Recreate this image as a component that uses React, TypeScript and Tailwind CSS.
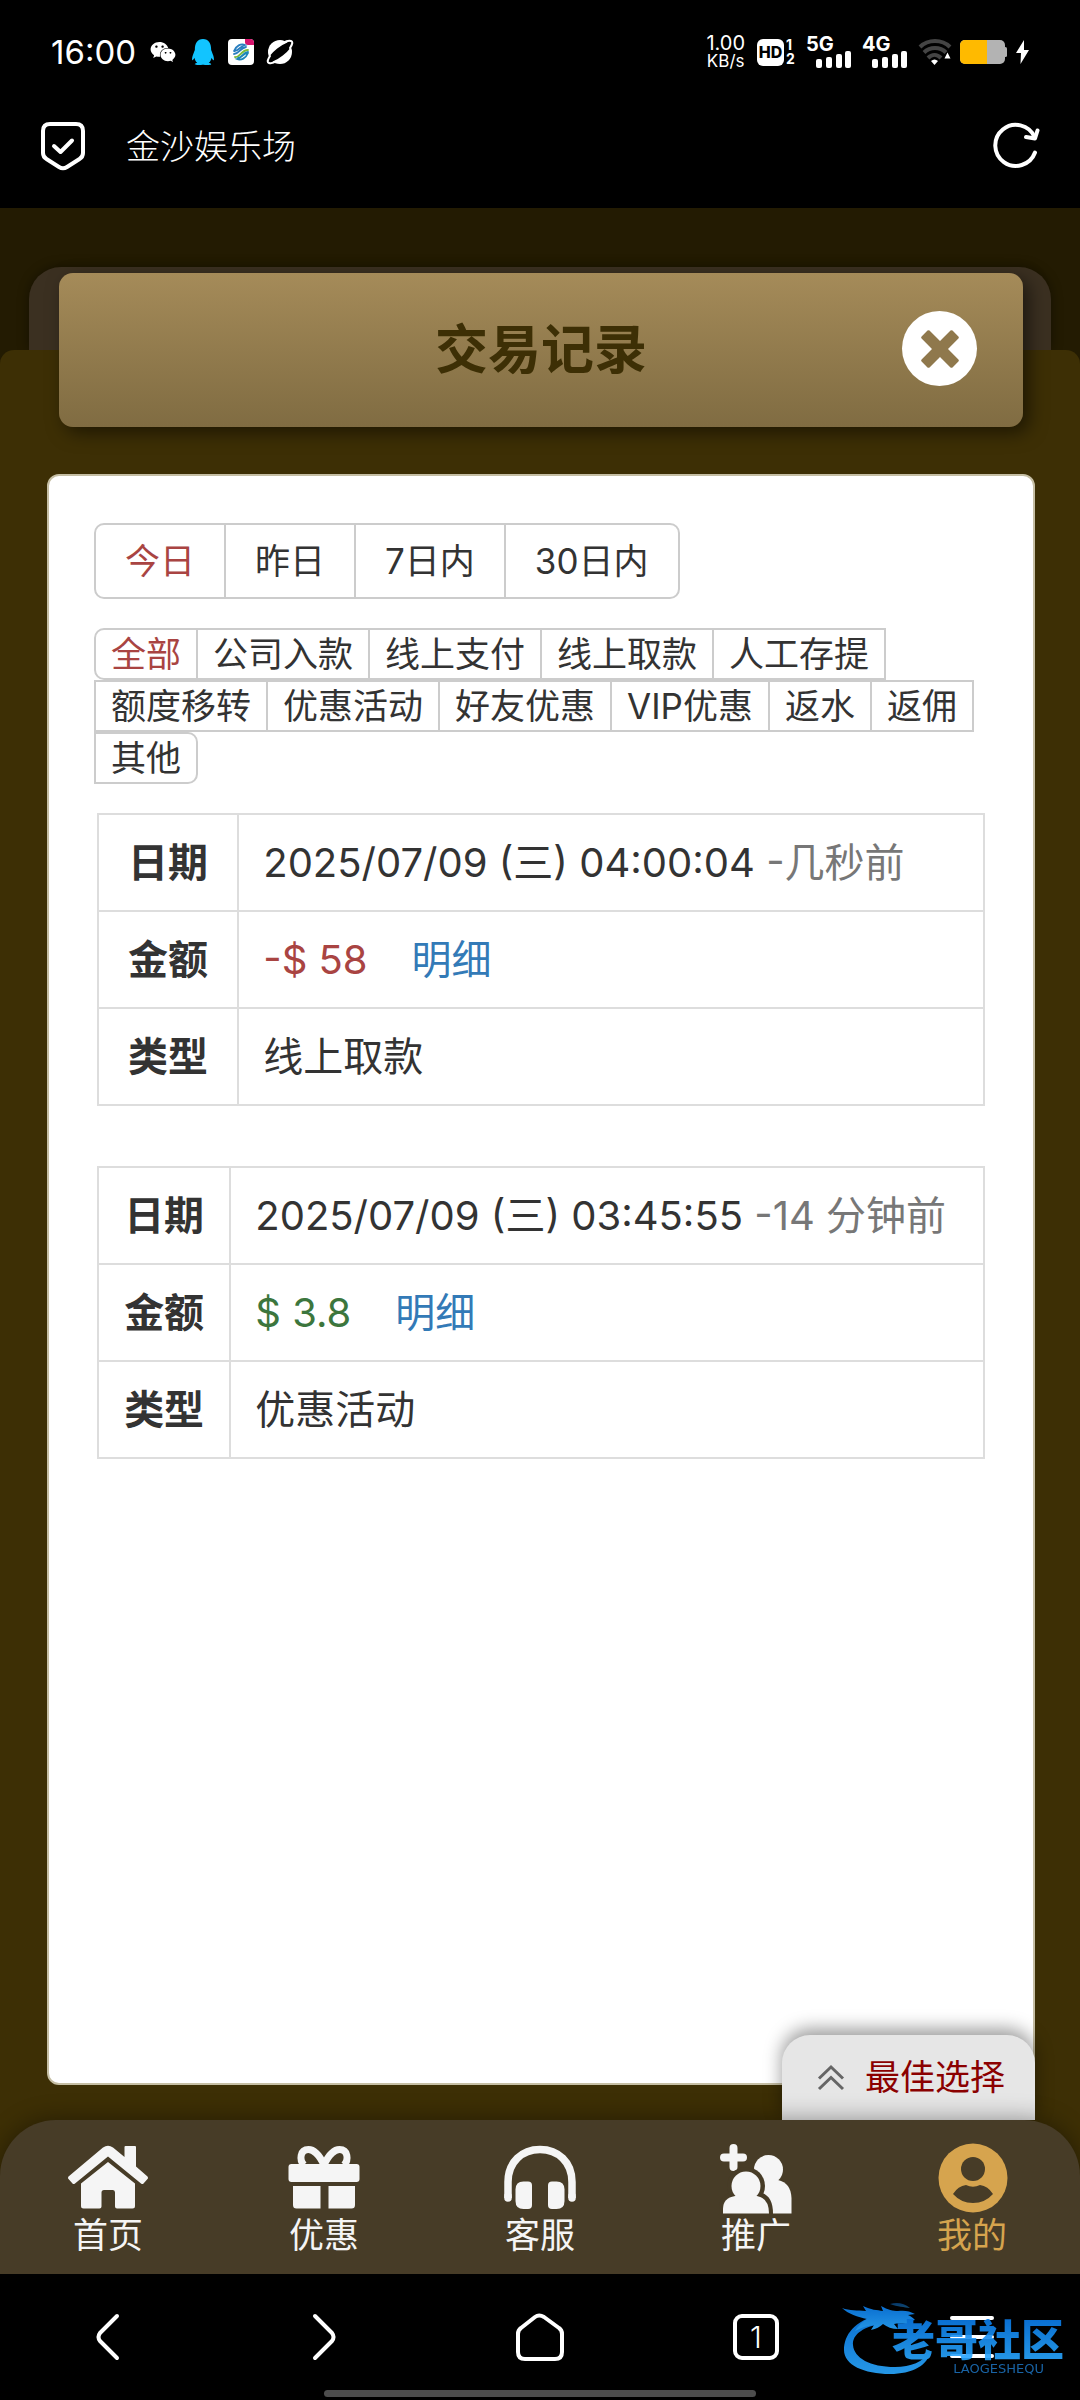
import { ReactNode } from 'react';
import { FaQq, FaWeixin } from 'react-icons/fa';

interface TransactionRecord {
  date: string;
  ago: string;
  amount: string;
  negative: boolean;
  type: string;
}

const periods = ['今日', '昨日', '7日内', '30日内'];

// Each row of the filter wraps on its own
const typeRows = [
  ['全部', '公司入款', '线上支付', '线上取款', '人工存提'],
  ['额度移转', '优惠活动', '好友优惠', 'VIP优惠', '返水', '返佣'],
  ['其他'],
];

const records: TransactionRecord[] = [
  {
    date: '2025/07/09 (三) 04:00:04',
    ago: '-几秒前',
    amount: '-$ 58',
    negative: true,
    type: '线上取款',
  },
  {
    date: '2025/07/09 (三) 03:45:55',
    ago: '-14 分钟前',
    amount: '$ 3.8',
    negative: false,
    type: '优惠活动',
  },
];

function SignalBars({ label }: { label: string }) {
  return (
    <div className="relative h-8 w-[46px]">
      <span className="absolute left-0 top-0 text-[20px] font-bold leading-4">{label}</span>
      <svg viewBox="0 0 46 32" className="absolute inset-0" fill="currentColor" aria-hidden="true">
        <rect x="10" y="23" width="6" height="9" rx="2" />
        <rect x="20" y="21" width="6" height="11" rx="2" />
        <rect x="30" y="18" width="6" height="14" rx="2" />
        <rect x="39" y="15" width="6" height="17" rx="2" />
      </svg>
    </div>
  );
}

function StatusBar() {
  return (
    <div className="flex h-[104px] items-center justify-between pl-[51px] pr-[51px]">
      <div className="flex items-center">
        <span className="w-[99px] text-[33px] leading-10">16:00</span>
        <FaWeixin className="size-[26px]" />
        <FaQq className="ml-3.5 size-[26px] text-[#12c4ff]" />
        {/* Carrier app */}
        <svg viewBox="0 0 26 26" className="ml-3 size-[26px]" aria-hidden="true">
          <rect width="26" height="26" rx="4" fill="#fff" />
          <path d="M17 0h5a4 4 0 0 1 4 4v2h-6a3 3 0 0 1-3-3z" fill="#d6136c" />
          <g fill="none" strokeWidth="1.8" strokeLinecap="round">
            <path d="M6 12c2-5 7-8 11-6-4 1-6 5-10 6M6 15c5 0 6-6 12-7" stroke="#2a7fc0" />
            <path d="M7 18c5 1 6-7 13-7" stroke="#7cbb3c" />
            <path d="M20 14c-2 5-7 8-11 6 4-1 6-5 10-6M10 19c4 0 5-6 10-6" stroke="#1c86b8" />
          </g>
        </svg>
        {/* Planet */}
        <svg viewBox="0 0 28 26" className="ml-3 h-[26px] w-7" aria-hidden="true">
          <circle cx="14" cy="13" r="12" fill="#fff" />
          <ellipse cx="14" cy="13" rx="15" ry="4.500" transform="rotate(-38 14 13)" fill="#000" />
          <path
            d="M4 17Q0 23 3 24q3 1 8-2M24 9q4-6 1-7-3-1-8 2"
            fill="none"
            stroke="#fff"
            strokeWidth="2"
            strokeLinecap="round"
          />
        </svg>
      </div>

      <div className="flex items-center">
        <div className="mr-3 flex flex-col items-center">
          <span className="text-[20px] leading-[18px]">1.00</span>
          <span className="text-[17px] leading-[18px]">KB/s</span>
        </div>
        <span className="flex size-[27px] items-center justify-center rounded-md bg-white text-[16px] font-extrabold text-black">
          HD
        </span>
        <div className="ml-0.5 mr-2.5 flex w-2.5 flex-col text-[14px] font-bold leading-[14px]">
          <span>1</span>
          <span>2</span>
        </div>
        <SignalBars label="5G" />
        <div className="w-2.5" />
        <SignalBars label="4G" />
        <svg viewBox="0 0 34 28" className="ml-2.5 h-7 w-[34px]" fill="none" aria-hidden="true">
          <g stroke="#444" strokeWidth="4">
            <path d="M2 9C10 1 24 1 32 9" />
            <path d="M6 14.500c6-6 16-6 22 0" />
            <path d="M10 20c4-4 9-4 13 0" />
          </g>
          <path d="M13 23q3.500-3 7 0l-3.500 4z" fill="#fff" />
          <path d="M26.500 20.500l3-6 3 6z" fill="#fff" />
        </svg>
        <svg viewBox="0 0 48 24" className="ml-2 h-6 w-12" aria-hidden="true">
          <rect x="0" y="0" width="45" height="24" rx="5" fill="#b3b3b3" />
          <rect x="44" y="7" width="3" height="10" rx="1.500" fill="#b3b3b3" />
          <path d="M5 0h22v24H5a5 5 0 0 1-5-5V5a5 5 0 0 1 5-5z" fill="#ffba00" />
        </svg>
        <svg viewBox="0 0 13 24" className="ml-2 h-6 w-[13px]" fill="#fff" aria-hidden="true">
          <path d="M8 0L0 13h5L4.500 24 13 10H8z" />
        </svg>
      </div>
    </div>
  );
}

function BrowserBar() {
  return (
    <div className="flex h-[104px] items-start px-10 pt-[17px]">
      <svg
        viewBox="0 0 46 50"
        className="h-[50px] w-[46px]"
        fill="none"
        stroke="#fff"
        strokeWidth="4"
        strokeLinecap="round"
        strokeLinejoin="round"
        aria-hidden="true"
      >
        <path d="M10 3h26q7 0 7 7v22q0 4-3.500 6L27 46q-4 2.500-8 0L6.500 38Q3 36 3 32V10q0-7 7-7z" />
        <path d="M14 25l6.500 6L32 19.500" />
      </svg>
      <h1 className="ml-10 flex-1 text-[34px] font-light leading-[52px]">金沙娱乐场</h1>
      <button type="button" aria-label="刷新" className="h-[50px]">
        <svg
          viewBox="0 0 48 50"
          className="h-[50px] w-12"
          fill="none"
          stroke="#fff"
          strokeWidth="4"
          strokeLinecap="round"
          strokeLinejoin="round"
        >
          <path d="M43 31.500A20.500 20.500 0 1 1 42.500 16" />
          <path d="M45.500 9.500L43 17.500l-9-1.500" />
        </svg>
      </button>
    </div>
  );
}

function PageHeader() {
  return (
    <header className="relative mx-[57px] -mt-[77px] ml-[59px] flex h-[154px] items-center justify-center rounded-[14px] bg-linear-to-b from-[#a58b59] to-[#806c42] shadow-[6px_6px_18px_rgba(0,0,0,0.5)]">
      <h2 className="text-[53px] font-bold leading-none text-[#3d2f05]">交易记录</h2>
      <button
        type="button"
        aria-label="关闭"
        className="absolute right-[46px] top-[38px] flex size-[75px] items-center justify-center rounded-full bg-white"
      >
        <svg viewBox="0 0 38 38" className="size-[38px]" fill="#8f784c">
          <path d="M8.500.600L19 11 29.500.600q1-.900 2 0l5.900 5.900q.900 1 0 2L27 19l10.400 10.500q.900 1 0 2l-5.900 5.900q-1 .900-2 0L19 27 8.500 37.400q-1 .900-2 0L.600 31.500q-.900-1 0-2L11 19 .600 8.500q-.900-1 0-2L6.500.600q1-.900 2 0z" />
        </svg>
      </button>
    </header>
  );
}

function PeriodFilter() {
  return (
    <div className="flex w-fit divide-x-2 divide-[#ccc] rounded-[10px] border-2 border-[#ccc] text-[35px]">
      {periods.map((period, i) => (
        <button
          key={period}
          type="button"
          aria-pressed={i === 0}
          className={`h-18 px-[29px] ${i === 0 ? 'text-[#a94442]' : ''}`}
        >
          {period}
        </button>
      ))}
    </div>
  );
}

function TypeFilter() {
  return (
    <div className="mt-[29px] flex flex-col items-start text-[35px]">
      {typeRows.map((row, r) => (
        <div
          key={r}
          className={`flex divide-x-2 divide-[#ccc] border-2 border-[#ccc] ${r === 0 ? 'rounded-l-[10px]' : ''} ${
            r === typeRows.length - 1 ? 'rounded-r-[10px]' : ''
          }`}
        >
          {row.map((type) => (
            <button
              key={type}
              type="button"
              aria-pressed={type === '全部'}
              className={`h-12 px-[15px] leading-[48px] ${type === '全部' ? 'text-[#a94442]' : ''}`}
            >
              {type}
            </button>
          ))}
        </div>
      ))}
    </div>
  );
}

function Row({ label, children }: { label: string; children: ReactNode }) {
  return (
    <tr>
      <th scope="row" className="h-[97px] border-2 border-[#ddd] px-6 font-bold">
        {label}
      </th>
      <td className="border-2 border-[#ddd] px-6">{children}</td>
    </tr>
  );
}

function RecordTable({ record }: { record: TransactionRecord }) {
  return (
    <div className="px-[3px]">
      <table className="w-full border-collapse whitespace-nowrap text-[40px] leading-[58px]">
        <tbody>
          <Row label="日期">
            {record.date} <span className="text-[#777]">{record.ago}</span>
          </Row>
          <Row label="金额">
            <span className={record.negative ? 'text-[#a94442]' : 'text-[#3c763d]'}>{record.amount}</span>
            <a href="#detail" className="ml-11 text-[#337ab7]">
              明细
            </a>
          </Row>
          <Row label="类型">{record.type}</Row>
        </tbody>
      </table>
    </div>
  );
}

const HomeIcon = (
  <svg viewBox="0 0 80 72" className="h-18 w-20" fill="currentColor" aria-hidden="true">
    <path d="M35 5.500Q40 2 45 5.500L56.500 15V5q0-1 1-1H67q1 0 1 1v19.500l11.500 10q1 1.500 0 2.500l-4 4.500q-1 1-2.500 0L40 14.500 7 41.500q-1.500 1-2.500 0l-4-4.500q-1-1 0-2.500z" />
    <path d="M40 20l27 21.500V64q0 2.500-2.500 2.500H49q-2 0-2-2V50.500q0-2.500-2-2.500h-9q-2.500 0-2.500 2.500v14q0 2-2 2h-16Q13 66.500 13 64V41.500z" />
  </svg>
);

const GiftIcon = (
  <svg viewBox="0 0 72 72" className="size-18" fill="currentColor" aria-hidden="true">
    <rect x="0.5" y="22" width="71" height="18" rx="3" />
    <path d="M5 44h27.500v22.500H8.500q-3.500 0-3.500-3.500zM40.500 44H67v19q0 3.500-3.500 3.500h-23z" />
    <g fill="none" stroke="currentColor" strokeWidth="7">
      <path d="M36 23C31 12 25 7.500 20.500 7.500 12 7.500 11 18 16 23" />
      <path d="M36 23c5-11 11-15.500 15.500-15.500C60 7.500 61 18 56 23" />
    </g>
  </svg>
);

const ServiceIcon = (
  <svg viewBox="0 0 74 72" className="h-18 w-[74px]" fill="currentColor" aria-hidden="true">
    <path
      d="M5 56V40C5 20 19 7.500 37 7.500S69 20 69 40v16"
      fill="none"
      stroke="currentColor"
      strokeWidth="7.500"
    />
    <path d="M5 54v2M69 54v2" stroke="currentColor" strokeWidth="7.500" strokeLinecap="round" />
    <path d="M20.500 39.500H25q4 0 4 4V63q0 4-4 4h-4.500q-8 0-8-8V47.500q0-8 8-8z" />
    <path d="M53.500 39.500H49q-4 0-4 4V63q0 4 4 4h4.500q8 0 8-8V47.500q0-8-8-8z" />
  </svg>
);

const PromoteIcon = (
  <svg viewBox="0 0 76 72" className="h-18 w-[76px]" fill="currentColor" aria-hidden="true">
    <path d="M6 15.500h19M15.500 6v19" stroke="currentColor" strokeWidth="8" strokeLinecap="round" />
    <circle cx="50.500" cy="27.500" r="14.500" />
    <path d="M38 71.500V38h22q13 3 13.500 18v15.500z" />
    <path
      d="M5 71.500V67q0-12 12-13h22q12 1 12 17.500z"
      fill="#473c27"
      stroke="#473c27"
      strokeWidth="8"
    />
    <circle cx="28" cy="44" r="19" fill="#473c27" />
    <path d="M5 71.500V67q0-11 12-13h22q12 2 12 17.500z" />
    <circle cx="28" cy="44" r="14.500" />
  </svg>
);

const MineIcon = (
  <svg viewBox="0 0 72 72" className="size-18" aria-hidden="true">
    <circle cx="37" cy="36" r="34.500" fill="currentColor" />
    <circle cx="37" cy="27" r="12" fill="#473c27" />
    <path d="M17 52q5-8 13-9 7 3.500 14 0 8 1 13 9-8 9-20 9t-20-9z" fill="#473c27" />
  </svg>
);

const tabs = [
  { label: '首页', icon: HomeIcon },
  { label: '优惠', icon: GiftIcon },
  { label: '客服', icon: ServiceIcon },
  { label: '推广', icon: PromoteIcon },
  { label: '我的', icon: MineIcon, active: true },
];

function TabBar() {
  return (
    <nav className="relative grid h-[154px] grid-cols-5 rounded-t-[56px] bg-[#473c27] shadow-[0_0_24px_rgba(0,0,0,0.4)]">
      {tabs.map((tab) => (
        <a
          key={tab.label}
          href="#tab"
          className={`flex flex-col items-center pt-[22px] text-[35px] leading-[42px] ${
            tab.active ? 'text-[#d6a44e]' : 'text-[#f5f5f5]'
          }`}
        >
          {tab.icon}
          {tab.label}
        </a>
      ))}
    </nav>
  );
}

function NavButton({ label, children }: { label: string; children: ReactNode }) {
  return (
    <button type="button" aria-label={label} className="flex items-center justify-center">
      <svg
        viewBox="0 0 50 50"
        className="size-[50px]"
        fill="none"
        stroke="#fff"
        strokeWidth="4"
        strokeLinecap="round"
        strokeLinejoin="round"
      >
        {children}
      </svg>
    </button>
  );
}

function Watermark() {
  return (
    <div className="pointer-events-none absolute right-3 top-[26px] flex h-[76px] w-[226px] flex-col items-end opacity-90">
      <svg viewBox="0 0 226 76" className="absolute inset-0" aria-hidden="true">
        <defs>
          <linearGradient id="dragon" x1="0" y1="0" x2="0" y2="1">
            <stop offset="0" stopColor="#0b7be8" />
            <stop offset="1" stopColor="#2aa8ff" />
          </linearGradient>
        </defs>
        <g fill="url(#dragon)">
          <path d="M38 14C12 21 2 35 2 50c0 15 20 24 46 24 22 0 39-9 40-23-7 11-19 16-35 16-25 0-41-9-42-22-1-11 12-19 29-21z" />
          <path d="M0 8c8 3 15 2 24 3l-3-5c8 4 14 4 20 5l-2-5c7 4 12 5 17 5 6-1 12 0 17 3l-7 1c3 1 5 3 7 5l-6 1 4 4c-7-1-13-2-19-1l4 5c-6 0-11-2-15-5-3 3-7 5-12 6l3-5c-8 1-13 3-19 6 3-5 7-9 12-12C16 17 6 14 0 8z" />
          <path d="M48 4c7-2 14-1 20 4-6-1-12-1-20-4z" opacity="0.5" />
        </g>
      </svg>
      <span className="relative mr-1 mt-[19px] bg-linear-to-b from-[#0b7be8] to-[#2aa8ff] bg-clip-text text-[43px] font-black leading-[42px] text-transparent">
        老哥社区
      </span>
      <span className="relative mr-6 font-['DejaVu_Sans'] text-[13px] leading-4 text-[#1c6fb8]">LAOGESHEQU</span>
    </div>
  );
}

function BrowserNav() {
  return (
    <footer className="relative h-[126px] bg-black pt-[38px]">
      <div className="grid grid-cols-5">
        <NavButton label="后退">
          <path d="M34 4L17 21q-3 4 0 8l17 17" />
        </NavButton>
        <NavButton label="前进">
          <path d="M16 4l17 17q3 4 0 8L16 46" />
        </NavButton>
        <NavButton label="主页">
          <path d="M20 5q4-3 9 0l15 11q3 2 3 6v18q0 7-7 7H10q-7 0-7-7V22q0-4 3-6z" />
        </NavButton>
        <button type="button" aria-label="标签页" className="flex items-center justify-center">
          <span className="flex size-[46px] items-center justify-center rounded-[9px] border-4 border-white text-[30px] font-light leading-none">
            1
          </span>
        </button>
        <NavButton label="菜单">
          <path d="M5 6h40M5 25h40M5 44h40" />
        </NavButton>
      </div>
      <Watermark />
      <div className="mx-auto mt-[28px] h-[7px] w-2/5 rounded-full bg-[#4d4d4d]" />
    </footer>
  );
}

export default function App() {
  return (
    <div className="flex min-h-screen flex-col bg-black font-[Inter,'Noto_Sans_CJK_SC',sans-serif] text-white">
      <StatusBar />
      <BrowserBar />

      <main className="flex flex-1 flex-col bg-[#231b02]">
        {/* Edge of the panel that peeks out behind the header */}
        <div className="mx-[29px] mt-[59px] h-[83px] rounded-t-[32px] bg-[#3b3021] shadow-[0_0_12px_rgba(0,0,0,0.4)]" />

        <div className="relative flex flex-1 flex-col rounded-t-[14px] bg-[#3d2f05]">
          <PageHeader />

          <section className="mx-[45px] mb-[35px] ml-[47px] mt-[47px] flex-1 rounded-xl border-2 border-[#c5bea4] bg-white px-[45px] pt-[47px] text-[#333]">
            <PeriodFilter />
            <TypeFilter />
            <div className="mt-[29px] flex flex-col gap-[60px]">
              {records.map((record) => (
                <RecordTable key={record.date} record={record} />
              ))}
            </div>
          </section>

          <button
            type="button"
            className="absolute bottom-[154px] right-[45px] flex h-[85px] items-center gap-5 rounded-t-[28px] bg-[#e6e6e6] pl-[35px] pr-[30px] text-[35px] text-[#8b0000] shadow-[0_-6px_18px_rgba(0,0,0,0.4)]"
          >
            <svg
              viewBox="0 0 28 28"
              className="size-7"
              fill="none"
              stroke="#666"
              strokeWidth="3"
              aria-hidden="true"
            >
              <path d="M2 14.500L14 3l12 11.500M2 25L14 13.500 26 25" />
            </svg>
            最佳选择
          </button>

          <TabBar />
        </div>
      </main>

      <BrowserNav />
    </div>
  );
}
